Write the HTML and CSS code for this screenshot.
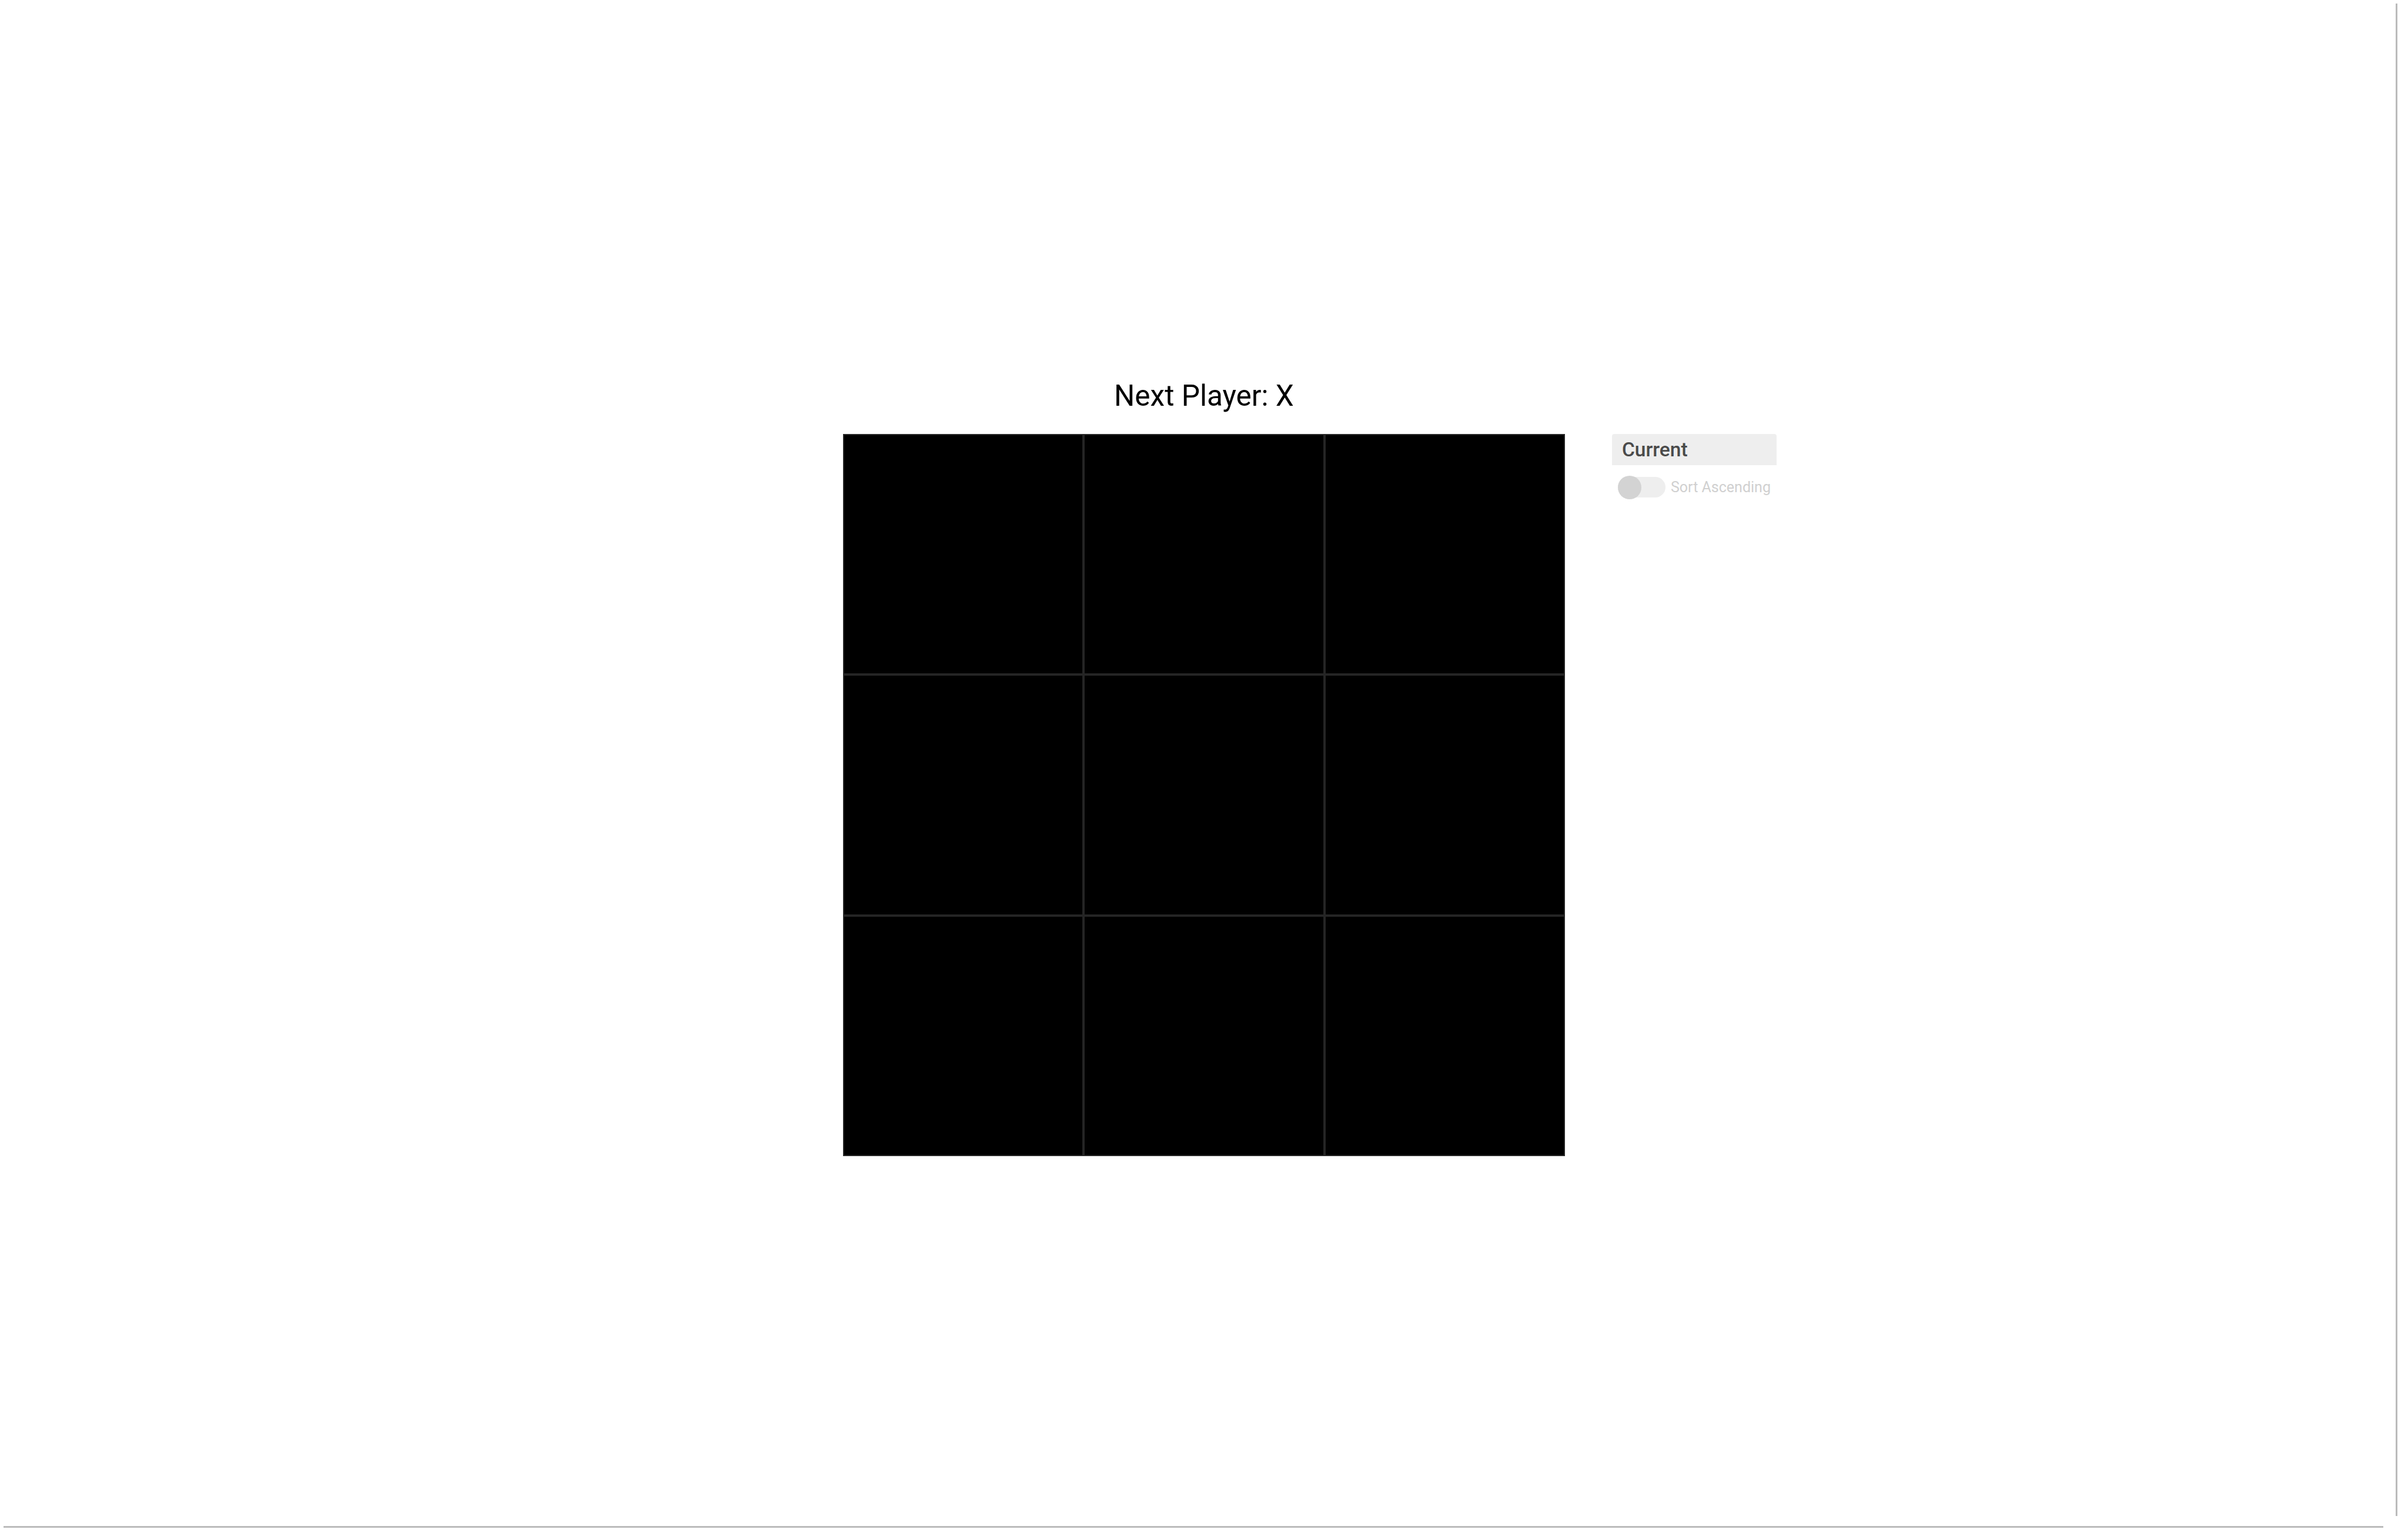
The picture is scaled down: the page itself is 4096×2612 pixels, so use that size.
FILE: index.html
```html
<!DOCTYPE html>
<html>

<head>
    <meta charset="utf-8">
    <title>Tic Tac Toe</title>
    <link rel="stylesheet" href="styles.css">
</head>

<body>
    <div class="game">
        <div class="status">Next Player: X</div>
        <div class="row">
            <div class="spacer"></div>
            <div class="board">
                <button class="square"></button>
                <button class="square"></button>
                <button class="square"></button>
                <button class="square"></button>
                <button class="square"></button>
                <button class="square"></button>
                <button class="square"></button>
                <button class="square"></button>
                <button class="square"></button>
            </div>
            <div class="info">
                <ol class="moves">
                    <li class="move current">Current</li>
                </ol>
                <label class="sort">
                    <span class="toggle"><span class="knob"></span></span>
                    <span class="sort-label">Sort Ascending</span>
                </label>
            </div>
        </div>
    </div>
    <div class="scroll-y"></div>
    <div class="scroll-x"></div>
</body>

</html>
```

FILE: styles.css
```css
html, body {
    font-family: Roboto, "Noto Sans", sans-serif;
    background: #ffffff;
}

body {
    margin: 0;
    padding: 0;
}

.game {
    display: flex;
    flex-direction: column;
    align-items: center;
    padding-top: 643px;
}

.status {
    font-size: 49.5px;
    line-height: 60px;
    color: #000000;
    margin-bottom: 35px;
}

.row {
    display: grid;
    grid-template-columns: 1fr auto 1fr;
    width: 100%;
}

.board {
    display: grid;
    grid-template-columns: repeat(3, 409.33px);
    grid-template-rows: repeat(3, 409.33px);
}

.square {
    background: #000000;
    border: 2px solid #252525;
    margin: 0;
    padding: 0;
}

.info {
    padding-left: 80px;
}

.moves {
    list-style: none;
    margin: 0;
    padding: 0;
}

.move {
    width: 263px;
    height: 53px;
    padding-left: 17px;
    box-sizing: content-box;
    display: flex;
    align-items: center;
    font-size: 33.5px;
    font-weight: 500;
    color: #4a4a4a;
    background: #eeeeee;
    border-radius: 4px 4px 0 0;
}

.sort {
    display: flex;
    align-items: center;
    margin-top: 20px;
    padding-left: 10px;
    gap: 9px;
}

.toggle {
    position: relative;
    display: block;
    width: 81px;
    height: 35px;
    border-radius: 18px;
    background: #eeeeee;
}

.knob {
    position: absolute;
    left: 0;
    top: -2px;
    width: 40px;
    height: 40px;
    border-radius: 50%;
    background: #d3d3d3;
}

.sort-label {
    font-size: 25px;
    color: #d0d0d0;
}

.scroll-y {
    position: fixed;
    top: 6px;
    left: 4075px;
    width: 3px;
    height: 2572px;
    background: #bbbbbb;
}

.scroll-x {
    position: fixed;
    top: 2595px;
    left: 6px;
    width: 4048px;
    height: 3px;
    background: #bbbbbb;
}
```
